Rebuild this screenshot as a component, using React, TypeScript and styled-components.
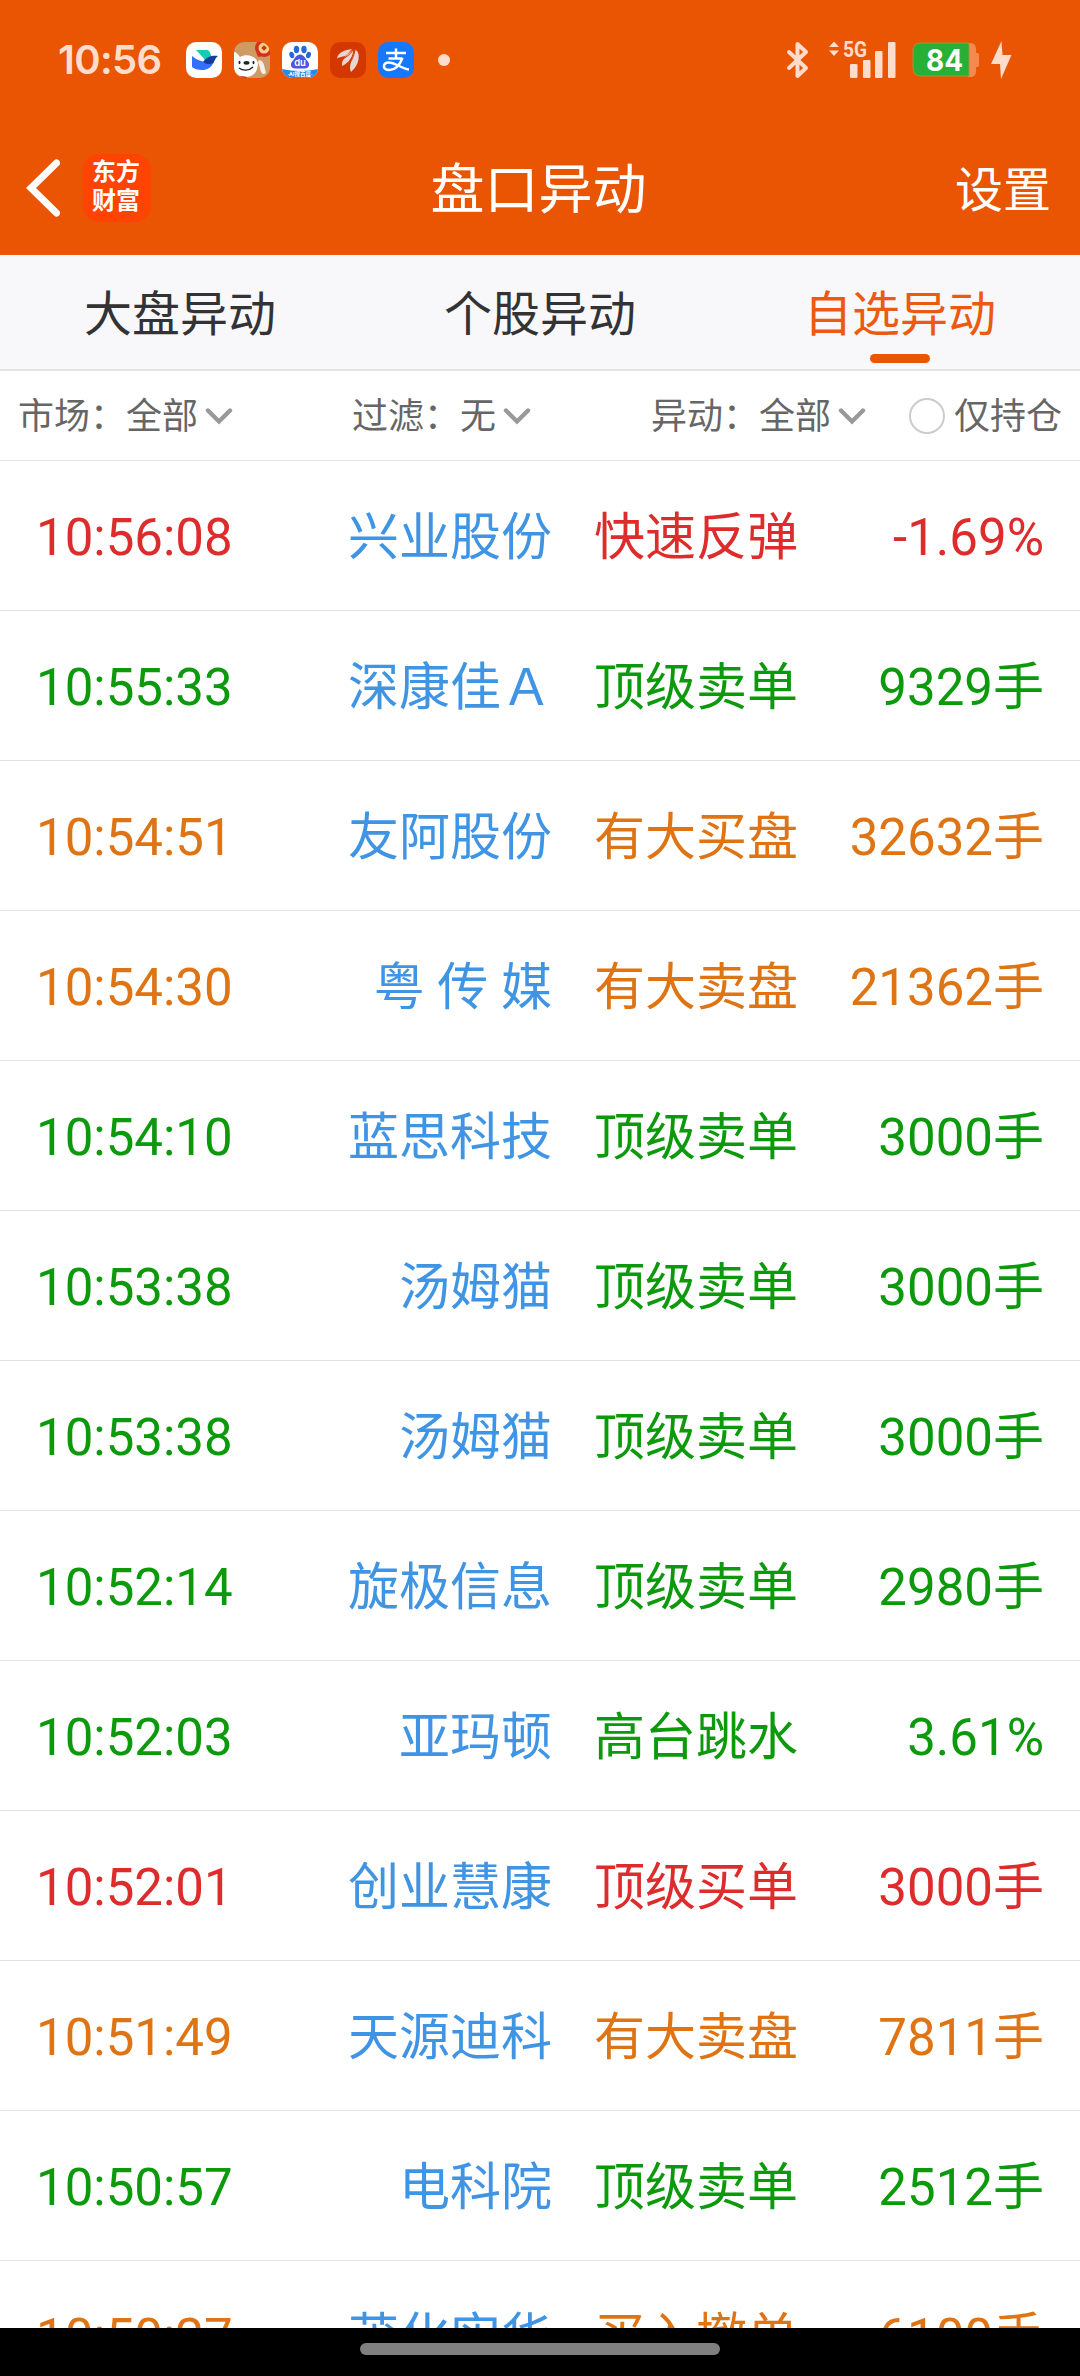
import React from 'react';
import styled, { createGlobalStyle } from 'styled-components';

const GlobalStyle = createGlobalStyle`
  html, body { margin: 0; padding: 0; background: #000; }
  * { box-sizing: border-box; }
`;

const tones = { red: '#dc2c2c', green: '#0c990c', orange: '#de7414' };
type Tone = keyof typeof tones;

const Screen = styled.div`
  width: 1080px;
  height: 2376px;
  display: flex;
  flex-direction: column;
  overflow: hidden;
  background: #fff;
  font-family: Roboto, 'Noto Sans CJK SC', sans-serif;
`;

const StatusBar = styled.div`
  height: 120px;
  flex: none;
  display: flex;
  align-items: center;
  justify-content: space-between;
  padding: 0 68px 0 58px;
  background: #ea5504;
  color: #ffdccb;
`;

const StatusGroup = styled.div`
  display: flex;
  align-items: center;
`;

const Clock = styled.span`
  width: 128px;
  font: 600 40px/40px Inter, sans-serif;
  letter-spacing: -0.7px;
  white-space: nowrap;
`;

const AppIcon = styled.svg`
  width: 36px;
  height: 36px;
  margin-right: 12px;
  border-radius: 10px;
  flex: none;
`;

const MoreDot = styled.span`
  width: 12px;
  height: 12px;
  margin-left: 12px;
  border-radius: 50%;
  background: #ffdccb;
`;

const Glyph = styled.svg<{ $gap?: number }>`
  display: block;
  flex: none;
  margin-left: ${(p) => p.$gap ?? 0}px;
`;

const Header = styled.div`
  height: 135px;
  flex: none;
  display: grid;
  grid-template-columns: 1fr auto 1fr;
  align-items: center;
  padding: 0 29px 0 26px;
  background: #ea5504;
  color: #fff;
`;

const HeaderStart = styled.div`
  display: flex;
  align-items: center;
  gap: 23px;
`;

const Brand = styled.div`
  width: 68px;
  height: 68px;
  border-radius: 16px;
  background: #ff4300;
  display: flex;
  flex-direction: column;
  align-items: center;
  justify-content: center;
  font: 700 24px/29px Roboto, 'Noto Sans CJK SC', sans-serif;
  padding: 0 2px 2px 0;
`;

const Title = styled.h1`
  margin: 0;
  padding-top: 7px;
  font-size: 54px;
  line-height: 60px;
  font-weight: 400;
`;

const Settings = styled.span`
  justify-self: end;
  padding-top: 6px;
  font-size: 48px;
  line-height: 54px;
`;

const Tabs = styled.div`
  height: 116px;
  flex: none;
  display: grid;
  grid-template-columns: repeat(3, 1fr);
  background: #f8f8fb;
  border-bottom: 2px solid #e2e2e2;
`;

const Tab = styled.div<{ $active?: boolean }>`
  display: flex;
  flex-direction: column;
  align-items: center;
  padding-top: 30px;
  font-size: 48px;
  line-height: 60px;
  color: ${(p) => (p.$active ? '#ea5a10' : '#333')};
`;

const Indicator = styled.span`
  width: 60px;
  height: 9px;
  margin-top: 9px;
  border-radius: 5px;
  background: #ea5504;
`;

const Filters = styled.div`
  height: 90px;
  flex: none;
  display: flex;
  align-items: center;
  padding: 0 18px;
  border-bottom: 1px solid #e2e2e2;
  font-size: 36px;
  line-height: 44px;
  color: #666;
  white-space: nowrap;
`;

const FilterText = styled.span`
  padding-top: 3px;
`;

const Filter = styled.div<{ $width: number }>`
  width: ${(p) => p.$width}px;
  flex: none;
  display: flex;
  align-items: center;
  gap: 7px;
`;

const HoldingsOnly = styled.label`
  display: flex;
  align-items: center;
  gap: 9px;
`;

const Radio = styled.span`
  width: 36px;
  height: 36px;
  border: 2px solid #ccc;
  border-radius: 50%;
`;

const List = styled.div`
  flex: 1;
  min-height: 0;
  overflow: hidden;
`;

const Row = styled.div<{ $tone: Tone }>`
  height: 150px;
  display: grid;
  grid-template-columns: 270px 246px 1fr auto;
  align-items: center;
  padding: 5px 36px 0 36px;
  border-bottom: 1px solid #e2e2e2;
  font-size: 51px;
  line-height: 60px;
  color: ${(p) => tones[p.$tone]};
  white-space: nowrap;
`;

const Name = styled.span`
  justify-self: end;
  color: #4094e4;
`;

const Kind = styled.span`
  padding-left: 42px;
`;

const NavBar = styled.div`
  height: 48px;
  flex: none;
  display: flex;
  justify-content: center;
  padding-top: 15px;
  background: #000;
`;

const HomePill = styled.span`
  width: 360px;
  height: 12px;
  border-radius: 6px;
  background: #808080;
`;

const rows: [string, string, string, string, Tone][] = [
  ['10:56:08', '兴业股份', '快速反弹', '-1.69%', 'red'],
  ['10:55:33', '深康佳Ａ', '顶级卖单', '9329手', 'green'],
  ['10:54:51', '友阿股份', '有大买盘', '32632手', 'orange'],
  ['10:54:30', '粤 传 媒', '有大卖盘', '21362手', 'orange'],
  ['10:54:10', '蓝思科技', '顶级卖单', '3000手', 'green'],
  ['10:53:38', '汤姆猫', '顶级卖单', '3000手', 'green'],
  ['10:53:38', '汤姆猫', '顶级卖单', '3000手', 'green'],
  ['10:52:14', '旋极信息', '顶级卖单', '2980手', 'green'],
  ['10:52:03', '亚玛顿', '高台跳水', '3.61%', 'green'],
  ['10:52:01', '创业慧康', '顶级买单', '3000手', 'red'],
  ['10:51:49', '天源迪科', '有大卖盘', '7811手', 'orange'],
  ['10:50:57', '电科院', '顶级卖单', '2512手', 'green'],
  ['10:50:27', '茂化实华', '买入撤单', '6100手', 'orange'],
];

const Chevron = () => (
  <Glyph width="28" height="18" viewBox="0 0 28 18" fill="none">
    <path d="M3 3.500 14 14.500 25 3.500" stroke="#999" strokeWidth="4.400" strokeLinecap="round" />
  </Glyph>
);

const LarkIcon = () => (
  <AppIcon viewBox="0 0 36 36">
    <rect width="36" height="36" fill="#fff" />
    <path d="M10 8h12c2 2 3 4 3.500 7l-6 4C17 15 13 11 10 8z" fill="#12cdb5" />
    <path d="M6 14c5 4 10 6 16 6l6 0c-3 6-7 8-12 8-4 0-8-1-10-3z" fill="#3370ff" />
    <path d="M17 20c3-4 7-7 15-6-3 2-3 5-5 7-3 2-7 1-10-1z" fill="#133c9a" />
  </AppIcon>
);

const DogIcon = () => (
  <AppIcon viewBox="0 0 36 36">
    <rect width="36" height="36" fill="#cf9a63" />
    <circle cx="30" cy="6" r="9" fill="#d5301d" />
    <path d="M22 10l2 5 4-1z" fill="#d5301d" />
    <circle cx="30" cy="6" r="5.500" fill="#f8cf85" />
    <rect x="28" y="4" width="4" height="4" fill="#c8321e" transform="rotate(45 30 6)" />
    <path d="M0 10c2 0 4 2 6 5 5-3 12-2 16 2l2 4c0 8-4 14-12 14C5 35 0 31 0 25z" fill="#fff" />
    <path d="M24 19c3-2 5 1 6 4l2 8c-2 2-4 1-5-1z" fill="#f6efe8" />
    <ellipse cx="12.500" cy="20.800" rx="3" ry="1.900" fill="#222" />
    <ellipse cx="5.500" cy="20.500" rx="1" ry="1.800" fill="#222" />
    <ellipse cx="19.500" cy="20.500" rx="1" ry="1.800" fill="#222" />
    <path d="M5 26c4 3 10 3 14-1" stroke="#222" strokeWidth="1.300" fill="none" />
    <path d="M4 35c3-1 6-1 9 0v1H4z" fill="#d5301d" />
  </AppIcon>
);

const PawIcon = () => (
  <AppIcon viewBox="0 0 36 36">
    <rect width="36" height="36" fill="#fff" />
    <ellipse cx="14.500" cy="7.500" rx="2.700" ry="3.700" fill="#2468dc" />
    <ellipse cx="22" cy="7.500" rx="2.700" ry="3.700" fill="#2468dc" />
    <ellipse cx="9.800" cy="13" rx="2.400" ry="3.300" fill="#2468dc" transform="rotate(-15 9.800 13)" />
    <ellipse cx="26.500" cy="13" rx="2.400" ry="3.300" fill="#2468dc" transform="rotate(15 26.500 13)" />
    <path d="M18 12.500c4 0 5 4 7.500 6.500 3 3 1.500 7.500-2.500 7.500H13c-4 0-5.500-4.500-2.500-7.500 2.500-2.500 3.500-6.500 7.500-6.500z" fill="#4a57e2" />
    <text x="18" y="24.300" fontSize="9.500" fontWeight="600" fontFamily="Inter, sans-serif" fill="#fff" textAnchor="middle">du</text>
    <path d="M0 27c11 2.500 25 2.500 36 0v9H0z" fill="#228ce8" />
    <text x="18" y="34" fontSize="5.500" fontWeight="700" fontFamily="Roboto, 'Noto Sans CJK SC', sans-serif" fill="#fff" textAnchor="middle">·AI搜百度·</text>
  </AppIcon>
);

const FeatherIcon = () => (
  <AppIcon viewBox="0 0 36 36">
    <rect width="36" height="36" fill="#d43800" />
    <g fill="#ead6cf">
      <path d="M7 16.500C8 10 15 8 22 7c-3 3-4 5-7 7-3 1-5 1-8 2.500z" />
      <path d="M12 24c-1-7 6-12 11-16.500C23.500 14 19 21 12 24z" />
      <path d="M21 30c-3-6 2-14 4-22.500 4 2 4.500 7 3 12-1 4-3.500 7-7 10.500z" />
    </g>
    <path d="M23 8c-3 5-7 7-11.500 10M25 8c-1 6-3 11-7.500 15" stroke="#d43800" strokeWidth="1" fill="none" />
  </AppIcon>
);

const PayIcon = () => (
  <AppIcon viewBox="0 0 36 36">
    <rect width="36" height="36" fill="#1677ff" />
    <g stroke="#fff" fill="none" strokeWidth="2.500">
      <path d="M8 11h20M18 6.500v9.500M10.500 16.500h14" />
      <path d="M24.500 16c-2 5-6 12-13 12-4 0-6-2-5.500-4.500C7 19 14 20 19 23c4 2 8 4 12 4.500" />
    </g>
  </AppIcon>
);

const BluetoothIcon = () => (
  <Glyph width="24" height="38" viewBox="0 0 24 38" fill="none">
    <path d="M3 11l17 16-8.500 8V3L20 11 3 27" stroke="#ffdccb" strokeWidth="4" strokeLinecap="round" strokeLinejoin="round" />
  </Glyph>
);

const SignalIcon = () => (
  <Glyph $gap={18} width="68" height="54" viewBox="0 -8 68 54" fill="#ffdccb">
    <path d="M6 0.500l5 5.500H1zM6 15l5-5.500H1z" />
    <text x="15" y="15.500" fontSize="22" fontWeight="700" fontFamily="Roboto, sans-serif" textLength="24" lengthAdjust="spacingAndGlyphs">5G</text>
    <rect x="22" y="23" width="7.500" height="14" rx="1" />
    <rect x="35" y="19" width="7.500" height="18" rx="1" />
    <rect x="47" y="10" width="7.500" height="27" rx="1" />
    <rect x="60" y="1" width="7.500" height="36" rx="1" />
  </Glyph>
);

const BatteryIcon = () => (
  <Glyph $gap={16} width="67" height="36" viewBox="0 0 67 36">
    <path d="M56 1h2q6 0 6 6v4h1.500q1.500 0 1.500 2v10q0 2-1.500 2H64v4q0 6-6 6h-2z" fill="#f48a50" />
    <path d="M57 1H9Q1 1 1 9v17q0 8 8 8h48z" fill="#26b035" stroke="#9a9a38" strokeWidth="1" />
    <text x="32.500" y="28.500" fontSize="30" fontWeight="700" fontFamily="Inter, sans-serif" fill="#fff" textAnchor="middle" textLength="37" lengthAdjust="spacingAndGlyphs">84</text>
  </Glyph>
);

const BoltIcon = () => (
  <Glyph $gap={11} width="22" height="38" viewBox="0 0 22 38">
    <path d="M11.500 0 1 23h9l1 15 10.500-24h-9z" fill="#ffdccb" />
  </Glyph>
);

export default function App() {
  return (
    <Screen>
      <GlobalStyle />
      <StatusBar>
        <StatusGroup>
          <Clock>10:56</Clock>
          <LarkIcon />
          <DogIcon />
          <PawIcon />
          <FeatherIcon />
          <PayIcon />
          <MoreDot />
        </StatusGroup>
        <StatusGroup>
          <BluetoothIcon />
          <SignalIcon />
          <BatteryIcon />
          <BoltIcon />
        </StatusGroup>
      </StatusBar>
      <Header>
        <HeaderStart>
          <Glyph width="34" height="58" viewBox="0 0 34 58" fill="none">
            <path d="M30.500 4 5 29l25.500 25" stroke="#fff" strokeWidth="7" strokeLinecap="round" />
          </Glyph>
          <Brand>
            <span>东方</span>
            <span>财富</span>
          </Brand>
        </HeaderStart>
        <Title>盘口异动</Title>
        <Settings>设置</Settings>
      </Header>
      <Tabs>
        <Tab>大盘异动</Tab>
        <Tab>个股异动</Tab>
        <Tab $active>
          自选异动
          <Indicator />
        </Tab>
      </Tabs>
      <Filters>
        <Filter $width={334}><FilterText>市场：全部</FilterText><Chevron /></Filter>
        <Filter $width={299}><FilterText>过滤：无</FilterText><Chevron /></Filter>
        <Filter $width={258}><FilterText>异动：全部</FilterText><Chevron /></Filter>
        <HoldingsOnly><Radio /><FilterText>仅持仓</FilterText></HoldingsOnly>
      </Filters>
      <List>
        {rows.map(([time, name, kind, amount, tone], i) => (
          <Row key={i} $tone={tone}>
            <span>{time}</span>
            <Name>{name}</Name>
            <Kind>{kind}</Kind>
            <span>{amount}</span>
          </Row>
        ))}
      </List>
      <NavBar>
        <HomePill />
      </NavBar>
    </Screen>
  );
}
